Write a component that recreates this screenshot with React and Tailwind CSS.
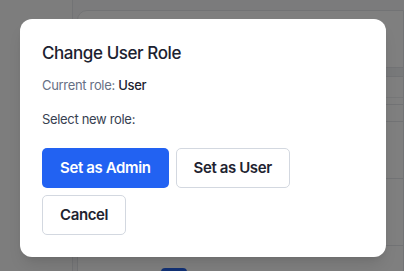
const Backdrop = () => {
  return (
    <div className="flex h-[271px] w-[404px] overflow-hidden bg-[#f7f7f8]">
      <div className="w-[73px] shrink-0 border-r border-[#e5e7eb] bg-[#fafafa]" />
      <div className="flex-1 pl-[4px] pt-[10px]">
        <div className="h-[300px] rounded-tl-[10px] border border-[#e5e7eb] bg-white">
          <div className="h-[56px]" />
          <div className="h-[10px] border-y border-[#e5e7eb] bg-[#f1f2f4]" />
          <div className="h-[21px] border-b border-[#eceef1]" />
          <div className="h-[7px] border-b border-[#e5e7eb]" />
          <div className="h-[17px] border-b border-[#e5e7eb]" />
          <div className="h-[57px] border-b border-[#e5e7eb]" />
          <div className="h-[67px] border-b border-[#e5e7eb]" />
          <div className="ml-[83px] mt-[22px] h-[10px] w-[26px] rounded bg-[#2563eb]" />
        </div>
      </div>
    </div>
  );
};

const Button = ({ primary, children }) => {
  return (
    <button
      className={
        primary
          ? 'h-[40px] rounded-[5px] bg-[#2262f2] px-[18px] text-[15px] font-semibold tracking-tight text-white'
          : 'h-[40px] rounded-[5px] border border-[#d3d8e0] bg-white px-[17px] text-[15px] font-semibold tracking-tight text-[#1e2330]'
      }>
      {children}
    </button>
  );
};

export default function App() {
  return (
    <div className="relative h-[271px] w-[404px] overflow-hidden" style={{ fontFamily: 'Inter, "Noto Sans", sans-serif' }}>
      <Backdrop />
      <div className="absolute inset-0 bg-black/50">
        <div className="ml-[20px] mt-[19px] w-[366px] rounded-[12px] bg-white p-[22px] shadow-lg">
          <h2 className="text-[17px] leading-[24px] font-medium tracking-tight text-[#1c2230]">Change User Role</h2>
          <p className="mt-[10px] text-[13px] leading-[20px] tracking-tight text-[#667085]">
            Current role: <span className="font-medium text-[#1c2230]">User</span>
          </p>
          <p className="mt-[14px] text-[13px] leading-[20px] tracking-tight text-[#374151]">Select new role:</p>
          <div className="mt-[19px] flex w-[260px] flex-wrap gap-[7px]">
            <Button primary>Set as Admin</Button>
            <Button>Set as User</Button>
            <Button>Cancel</Button>
          </div>
        </div>
      </div>
    </div>
  );
}
